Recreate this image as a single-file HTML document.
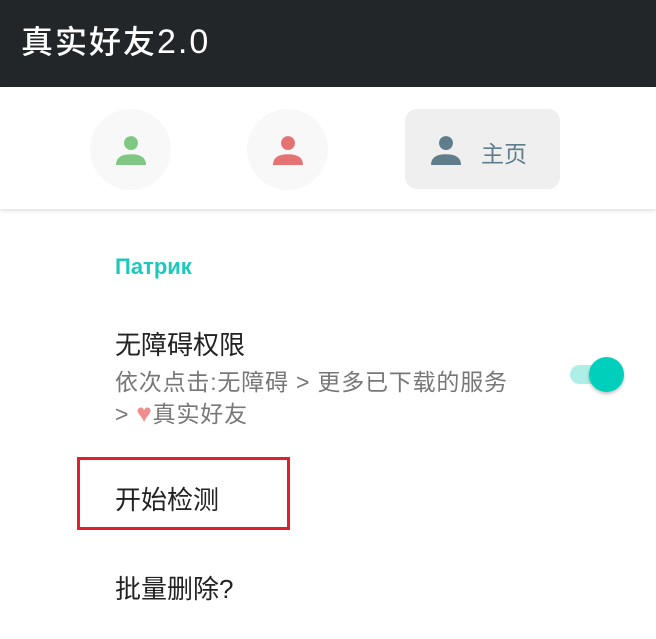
<!DOCTYPE html>
<html><head><meta charset="utf-8"><style>
body{margin:0;width:656px;height:639px;background:#fff;position:relative;overflow:hidden;font-family:"Liberation Sans","Noto Sans CJK SC",sans-serif}
.hdr{position:absolute;left:0;top:0;width:656px;height:87px;background:#232629;color:#fff;font-size:32px;line-height:85px;padding-left:21px;box-sizing:border-box;font-weight:500;letter-spacing:2px}
.nav{position:absolute;left:0;top:87px;width:656px;height:122px;background:#fff;box-shadow:0 2px 4px rgba(0,0,0,.12)}
.c{position:absolute;top:22px;width:81px;height:81px;border-radius:50%;background:#f8f8f8}
.pill{position:absolute;left:405px;top:22px;width:155px;height:80px;border-radius:12px;background:#efefef}
.t{position:absolute;white-space:nowrap}
svg{position:absolute}
</style></head><body>
<div class="hdr">真实好友<span style="font-size:34px">2.0</span></div>
<div class="nav">
<div class="c" style="left:90px"><svg style="left:26px;top:26px" width="30" height="30" viewBox="0 0 28 28"><circle cx="14" cy="7.5" r="6.5" fill="#80c784"/><path d="M0 28 Q0 18 14 18 Q28 18 28 28Z" fill="#80c784"/></svg></div>
<div class="c" style="left:247px"><svg style="left:26px;top:26px" width="30" height="30" viewBox="0 0 28 28"><circle cx="14" cy="7.5" r="6.5" fill="#e57373"/><path d="M0 28 Q0 18 14 18 Q28 18 28 28Z" fill="#e57373"/></svg></div>
<div class="pill"><svg style="left:26px;top:26px" width="30" height="30" viewBox="0 0 28 28"><circle cx="14" cy="7.5" r="6.5" fill="#607d8b"/><path d="M0 28 Q0 18 14 18 Q28 18 28 28Z" fill="#607d8b"/></svg><span class="t" style="left:76px;top:26px;font-size:23px;color:#607d8b">主页</span></div>
</div>
<div class="t" style="left:115px;top:254px;font-size:22px;color:#1cc9bb;font-weight:bold">Патрик</div>
<div class="t" style="left:115px;top:325px;font-size:26px;color:#222">无障碍权限</div>
<div class="t" style="left:115px;top:363px;font-size:23px;color:#777;letter-spacing:0.8px">依次点击:无障碍 &gt; 更多已下载的服务</div>
<div class="t" style="left:115px;top:395px;font-size:23px;color:#777;letter-spacing:0.8px">&gt; <span style="color:#f28b8b;font-size:26px">♥</span>真实好友</div>
<div style="position:absolute;left:570px;top:365px;width:48px;height:19px;border-radius:10px;background:#aeeee6"></div>
<div style="position:absolute;left:589px;top:357px;width:35px;height:35px;border-radius:50%;background:#00cfbb;box-shadow:0 2px 3px rgba(0,0,0,.25)"></div>
<div style="position:absolute;left:77px;top:457px;width:213px;height:73px;border:3px solid #e0202a;box-sizing:border-box"></div>
<div class="t" style="left:115px;top:480px;font-size:26px;color:#222">开始检测</div>
<div class="t" style="left:115px;top:569px;font-size:26px;color:#222">批量删除?</div>
</body></html>
